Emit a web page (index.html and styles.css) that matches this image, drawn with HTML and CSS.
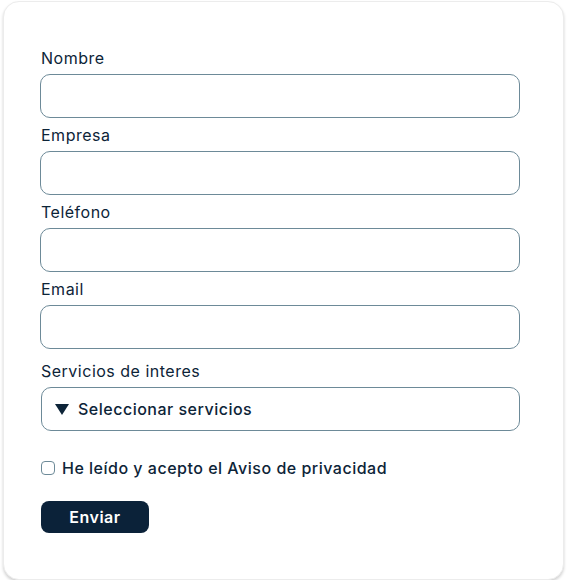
FILE: index.html
```html
<!DOCTYPE html>
<html lang="es">
<head>
  <meta charset="UTF-8">
  <meta name="viewport" content="width=device-width, initial-scale=1.0">
  <title>Contacto</title>
  <link rel="stylesheet" href="styles.css">
</head>
<body>
  <div class="card">
    <form class="contact-form">
      <div class="field">
        <label for="nombre">Nombre</label>
        <input type="text" id="nombre" class="text-input">
      </div>
      <div class="field">
        <label for="empresa">Empresa</label>
        <input type="text" id="empresa" class="text-input">
      </div>
      <div class="field">
        <label for="telefono">Teléfono</label>
        <input type="tel" id="telefono" class="text-input">
      </div>
      <div class="field">
        <label for="email">Email</label>
        <input type="email" id="email" class="text-input">
      </div>
      <div class="field field-services">
        <label>Servicios de interes</label>
        <details class="services">
          <summary>Seleccionar servicios</summary>
        </details>
      </div>
      <label class="privacy">
        <input type="checkbox" class="check">
        <span>He leído y acepto el Aviso de privacidad</span>
      </label>
      <button type="submit" class="button">Enviar</button>
    </form>
  </div>
</body>
</html>
```

FILE: styles.css
```css
body {
  margin: 0;
  background: #fff;
  font-family: Inter, 'Noto Sans', sans-serif;
  letter-spacing: 0.5px;
  color: #0d2438;
}
.card {
  width: 561px;
  height: 579px;
  margin: 1px 0 0 3px;
  box-sizing: border-box;
  border: 1px solid #ececec;
  border-radius: 16px;
  background: #fff;
  box-shadow: 0 2px 3px rgba(0, 0, 0, 0.18);
  padding: 44px 0 0 36px;
}
.contact-form {
  width: 480px;
  display: flex;
  flex-direction: column;
}
.field {
  display: flex;
  flex-direction: column;
  gap: 4px;
  margin-bottom: 5px;
}
.field label {
  font-size: 16px;
  line-height: 24px;
  padding-left: 1px;
}
.text-input {
  height: 44px;
  box-sizing: border-box;
  border: 1px solid #6d8a98;
  border-radius: 10px;
  margin: 0;
  padding: 0 12px;
  font: inherit;
}
.field-services {
  margin-top: 5px;
}
.services {
  margin-left: 1px;
  height: 44px;
  box-sizing: border-box;
  border: 1px solid #6d8a98;
  border-radius: 10px;
}
.services summary {
  list-style: none;
  display: flex;
  align-items: center;
  gap: 9px;
  height: 42px;
  padding-left: 13px;
  font-size: 16px;
  font-weight: 500;
  cursor: pointer;
}
.services summary::-webkit-details-marker {
  display: none;
}
.services summary::before {
  content: "";
  width: 0;
  height: 0;
  border-left: 7px solid transparent;
  border-right: 7px solid transparent;
  border-top: 11px solid #0d2438;
}
.privacy {
  display: flex;
  align-items: center;
  gap: 7px;
  margin-top: 20px;
  font-size: 16px;
  font-weight: 500;
  line-height: 24px;
}
.check {
  width: 14px;
  height: 14px;
  margin: 0 0 0 1px;
  appearance: none;
  border: 1px solid #6d8a98;
  border-radius: 4px;
  background: #fff;
}
.button {
  align-self: flex-start;
  margin: 21px 0 0 1px;
  width: 108px;
  height: 32px;
  background: #0b2239;
  color: #fff;
  border: none;
  border-radius: 8px;
  font-family: inherit;
  font-size: 16px;
  font-weight: 600;
  letter-spacing: 0.5px;
  cursor: pointer;
}
```
